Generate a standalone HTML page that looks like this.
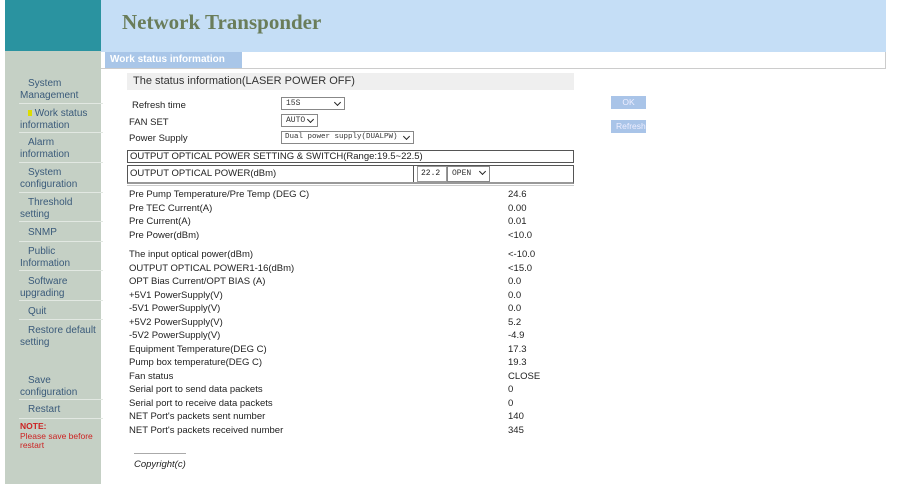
<!DOCTYPE html>
<html><head><style>
*{margin:0;padding:0;box-sizing:border-box}
body{width:914px;height:495px;background:#fff;position:relative;font-family:"Liberation Sans",sans-serif;font-size:9.5px;color:#222;overflow:hidden}
.a{position:absolute;white-space:nowrap}
.side{position:absolute;left:5px;top:51px;width:96px;height:433px;background:#c5d0c5}
.si{position:absolute;left:15px;width:80px;text-align:left;text-indent:8px;color:#3a5a7a;font-size:10px;line-height:11.5px;white-space:normal}
.sl{position:absolute;left:14px;width:84px;border-top:1px solid #e2e8e2}
.sel{border:1px solid #888;background:#fff;font-family:"Liberation Mono",monospace;font-size:8px;color:#333;padding-left:4px;line-height:11px;height:13px}
.sel:after{content:"";position:absolute;right:4px;top:2px;width:4px;height:4px;border-right:1.5px solid #222;border-bottom:1.5px solid #222;transform:rotate(45deg)}
.btn{position:absolute;left:611px;width:35px;height:13px;background:#a9c4e8;color:#eef;font-size:8.5px;line-height:13px;text-align:center;overflow:hidden}
</style></head><body>
<div class="a" style="left:5px;top:0;width:96px;height:51px;background:#2a93a0"></div>
<div class="a" style="left:101px;top:0;width:785px;height:52px;background:#c5def6"></div>
<div class="a" style="left:122px;top:10px;font-family:'Liberation Serif',serif;font-weight:bold;font-size:21px;color:#6a7d5a">Network Transponder</div>
<div class="a" style="left:101px;top:52px;width:785px;height:17px;border-bottom:1px solid #ccc;border-right:1px solid #ccc"></div>
<div class="a" style="left:105px;top:52px;width:137px;height:16px;background:#a9c6e8;color:#fff;font-weight:bold;font-size:10px;line-height:16px;padding-left:5px">Work status information</div>
<div class="side">
<div class="si" style="top:27px">System Management</div>
<div class="sl" style="top:52px"></div>
<div class="si" style="top:57px"><span style="display:inline-block;width:4px;height:6px;background:#dd0"></span> Work status information</div>
<div class="sl" style="top:81px"></div>
<div class="si" style="top:86px">Alarm information</div>
<div class="sl" style="top:111px"></div>
<div class="si" style="top:116px">System configuration</div>
<div class="sl" style="top:141px"></div>
<div class="si" style="top:146px">Threshold setting</div>
<div class="sl" style="top:170px"></div>
<div class="si" style="top:176px">SNMP</div>
<div class="sl" style="top:190px"></div>
<div class="si" style="top:195px">Public Information</div>
<div class="sl" style="top:219px"></div>
<div class="si" style="top:225px">Software upgrading</div>
<div class="sl" style="top:249px"></div>
<div class="si" style="top:255px">Quit</div>
<div class="sl" style="top:268px"></div>
<div class="si" style="top:274px">Restore default setting</div>
<div class="si" style="top:324px">Save configuration</div>
<div class="sl" style="top:348px"></div>
<div class="si" style="top:353px">Restart</div>
<div class="sl" style="top:367px"></div>
<div class="a" style="left:15px;top:371px;color:#c22;font-size:8.5px;line-height:9.5px;white-space:normal;width:82px"><b>NOTE:</b><br>Please save before restart</div>
</div>
<div class="a" style="left:127px;top:73px;width:447px;height:17px;background:#efefef;font-size:11px;line-height:17px;padding-left:6px;color:#333">The status information(LASER POWER OFF)</div>
<div class="a" style="left:132px;top:100px">Refresh time</div>
<div class="a sel" style="left:281px;top:97px;width:64px">15S</div>
<div class="a" style="left:129px;top:117px">FAN SET</div>
<div class="a sel" style="left:281px;top:114px;width:37px">AUTO</div>
<div class="a" style="left:129px;top:133px">Power Supply</div>
<div class="a sel" style="left:281px;top:131px;width:133px;font-size:7.5px;padding-left:3px">Dual power supply(DUALPW)</div>
<div class="btn" style="top:96px">OK</div>
<div class="btn" style="top:120px;text-align:left;padding-left:5px">Refresh</div>
<div class="a" style="left:127px;top:150px;width:447px;height:13px;border:1px solid #555;line-height:11px;padding-left:2px">OUTPUT OPTICAL POWER SETTING &amp; SWITCH(Range:19.5~22.5)</div>
<div class="a" style="left:127px;top:165px;width:447px;height:19px;border:1px solid #555;border-bottom:2px solid #999"></div>
<div class="a" style="left:128px;top:166px;width:286px;height:16px;border-right:1px solid #555;line-height:16px;padding-left:2px">OUTPUT OPTICAL POWER(dBm)</div>
<div class="a" style="left:417px;top:166px;width:30px;height:16px;border:1px solid #999;font-family:'Liberation Mono',monospace;font-size:8px;line-height:14px;padding-left:3px">22.2</div>
<div class="a sel" style="left:447px;top:166px;width:43px;height:16px;line-height:14px">OPEN</div>
<div class="a" style="left:127px;top:185px;width:447px;border-top:1px solid #ccc"></div>
<div class="a" style="left:129px;top:188px;line-height:13.5px">Pre Pump Temperature/Pre Temp (DEG C)<br>Pre TEC Current(A)<br>Pre Current(A)<br>Pre Power(dBm)</div>
<div class="a" style="left:508px;top:188px;line-height:13.5px">24.6<br>0.00<br>0.01<br>&lt;10.0</div>
<div class="a" style="left:129px;top:248px;line-height:13.5px">The input optical power(dBm)<br>OUTPUT OPTICAL POWER1-16(dBm)<br>OPT Bias Current/OPT BIAS (A)<br>+5V1 PowerSupply(V)<br>-5V1 PowerSupply(V)<br>+5V2 PowerSupply(V)<br>-5V2 PowerSupply(V)<br>Equipment Temperature(DEG C)<br>Pump box temperature(DEG C)<br>Fan status<br>Serial port to send data packets<br>Serial port to receive data packets<br>NET Port's packets sent number<br>NET Port's packets received number</div>
<div class="a" style="left:508px;top:248px;line-height:13.5px">&lt;-10.0<br>&lt;15.0<br>0.0<br>0.0<br>0.0<br>5.2<br>-4.9<br>17.3<br>19.3<br>CLOSE<br>0<br>0<br>140<br>345</div>
<div class="a" style="left:134px;top:453px;width:52px;border-top:1px solid #aaa"></div>
<div class="a" style="left:134px;top:459px;font-style:italic">Copyright(c)</div>
</body></html>
